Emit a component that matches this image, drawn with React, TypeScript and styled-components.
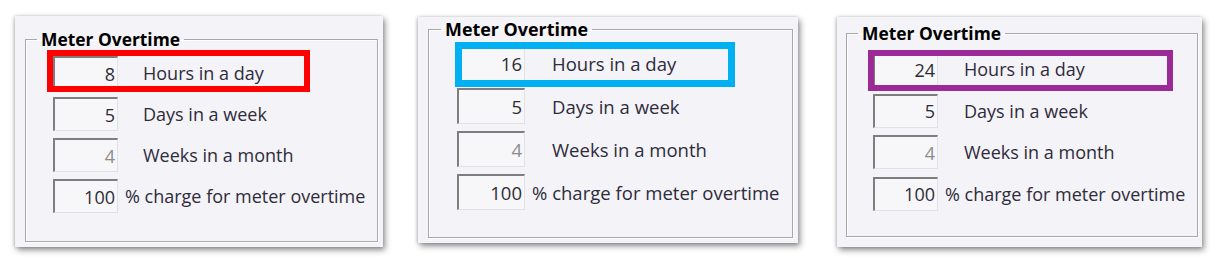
import styled, { createGlobalStyle } from "styled-components";

const GlobalStyle = createGlobalStyle`
  html, body {
    margin: 0;
    padding: 0;
    background: #ffffff;
  }
  body {
    font-family: "Open Sans", "Noto Sans", sans-serif;
  }
`;

type Row = { value: string; label: string; disabled?: boolean; tight?: boolean };

type PanelConfig = {
  left: number;
  top: number;
  width: number;
  height: number;
  pad: string;
  groupPad: string;
  legendShift: number;
  fieldWidth: number;
  rowHeight: number;
  rowGap: number;
  labelGap: number;
  scale: number;
  highlight: { color: string; top: number; left: number; width: number; height: number; thick: number };
  rows: Row[];
};

const rowsFor = (hours: string): Row[] => [
  { value: hours, label: "Hours in a day" },
  { value: "5", label: "Days in a week" },
  { value: "4", label: "Weeks in a month", disabled: true },
  { value: "100", label: "% charge for meter overtime", tight: true },
];

const panels: PanelConfig[] = [
  {
    left: 15,
    top: 16,
    width: 368,
    height: 231,
    pad: "13px 5px 5px 10px",
    groupPad: "7px 0 0 27px",
    legendShift: -16,
    fieldWidth: 65,
    rowHeight: 34,
    rowGap: 7,
    labelGap: 25,
    scale: 1,
    highlight: { color: "#ff0000", top: -6, left: -6, width: 263, height: 42, thick: 6 },
    rows: rowsFor("8"),
  },
  {
    left: 35,
    top: 17,
    width: 380,
    height: 226,
    pad: "2px 5px 5px 10px",
    groupPad: "6px 0 0 28px",
    legendShift: -16,
    fieldWidth: 68,
    rowHeight: 36,
    rowGap: 7,
    labelGap: 27,
    scale: 1.03,
    highlight: { color: "#00b0f0", top: -3, left: -2, width: 280, height: 45, thick: 7 },
    rows: rowsFor("16"),
  },
  {
    left: 39,
    top: 17,
    width: 365,
    height: 230,
    pad: "6px 4px 10px 9px",
    groupPad: "9px 0 0 26px",
    legendShift: -15,
    fieldWidth: 65,
    rowHeight: 34,
    rowGap: 7.5,
    labelGap: 26,
    scale: 1,
    highlight: { color: "#9c2a96", top: -2, left: -5, width: 305, height: 41, thick: 6 },
    rows: rowsFor("24"),
  },
];

const Strip = styled.div`
  display: flex;
  align-items: flex-start;
  width: 1221px;
  height: 259px;
`;

const Card = styled.div<{ $c: PanelConfig }>`
  box-sizing: border-box;
  display: flex;
  flex-direction: column;
  flex: none;
  margin-left: ${({ $c }) => $c.left}px;
  margin-top: ${({ $c }) => $c.top}px;
  width: ${({ $c }) => $c.width}px;
  height: ${({ $c }) => $c.height}px;
  padding: ${({ $c }) => $c.pad};
  background: #f4f3f7;
  box-shadow: 2px 3px 6px rgba(0, 0, 0, 0.45), -1px 0 3px rgba(0, 0, 0, 0.18);
`;

const Group = styled.fieldset<{ $pad: string }>`
  flex: 1;
  margin: 0;
  min-width: 0;
  padding: ${({ $pad }) => $pad};
  border: 1px solid #a8a8ab;
  box-shadow: inset 1px 1px 0 #ffffff, 1px 1px 0 #ffffff;
  display: flex;
  flex-direction: column;
`;

const Legend = styled.legend<{ $shift: number; $scale: number }>`
  margin-left: ${({ $shift }) => $shift}px;
  padding: 0 4px;
  font-family: "Open Sans", "Noto Sans", sans-serif;
  font-weight: 700;
  font-size: ${({ $scale }) => 17.4 * $scale}px;
  line-height: 20px;
  color: #000000;
`;

const Rows = styled.div<{ $gap: number }>`
  display: flex;
  flex-direction: column;
  gap: ${({ $gap }) => $gap}px;
`;

const FieldRow = styled.div<{ $h: number }>`
  position: relative;
  display: flex;
  align-items: center;
  height: ${({ $h }) => $h}px;
`;

const Field = styled.div<{ $w: number; $scale: number; $disabled?: boolean }>`
  box-sizing: border-box;
  width: ${({ $w }) => $w}px;
  height: 100%;
  display: flex;
  align-items: center;
  justify-content: flex-end;
  padding-right: 2px;
  background: #f7f6f9;
  border-top: 2px solid #7e7e80;
  border-left: 2px solid #7e7e80;
  border-right: 1px solid #e2e1e5;
  border-bottom: 1px solid #e2e1e5;
  font-size: ${({ $scale }) => 18 * $scale}px;
  color: ${({ $disabled }) => ($disabled ? "#8c8c8e" : "#2e2d36")};
`;

const Label = styled.span<{ $gap: number; $scale: number }>`
  margin-left: ${({ $gap }) => $gap}px;
  font-size: ${({ $scale }) => 18 * $scale}px;
  color: #2e2c3c;
  white-space: nowrap;
`;

const Highlight = styled.span<{ $color: string; $thick: number }>`
  position: absolute;
  box-sizing: border-box;
  border: ${({ $thick }) => $thick}px solid ${({ $color }) => $color};
  pointer-events: none;
`;

const Panel = ({ c }: { c: PanelConfig }) => (
  <Card $c={c}>
    <Group $pad={c.groupPad}>
      <Legend $shift={c.legendShift} $scale={c.scale}>
        Meter Overtime
      </Legend>
      <Rows $gap={c.rowGap}>
        {c.rows.map((r, i) => (
          <FieldRow key={r.label} $h={c.rowHeight}>
            <Field $w={c.fieldWidth} $scale={c.scale} $disabled={r.disabled}>
              {r.value}
            </Field>
            <Label $gap={r.tight ? 7 : c.labelGap} $scale={c.scale}>
              {r.label}
            </Label>
            {i === 0 && (
              <Highlight
                $color={c.highlight.color}
                $thick={c.highlight.thick}
                style={{
                  top: c.highlight.top,
                  left: c.highlight.left,
                  width: c.highlight.width,
                  height: c.highlight.height,
                }}
              />
            )}
          </FieldRow>
        ))}
      </Rows>
    </Group>
  </Card>
);

const App = () => (
  <>
    <GlobalStyle />
    <Strip>
      {panels.map((p) => (
        <Panel key={p.rows[0].value} c={p} />
      ))}
    </Strip>
  </>
);

export default App;
